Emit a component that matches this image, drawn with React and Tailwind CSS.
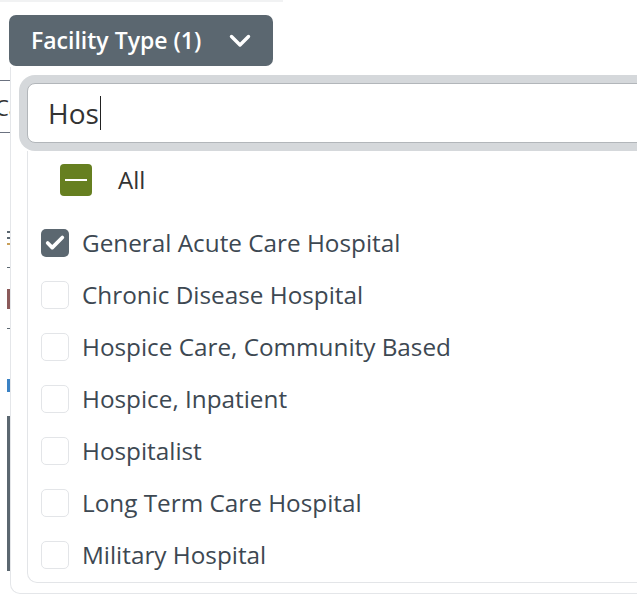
import { Check } from "lucide-react";

const items = [
  { label: "General Acute Care Hospital", checked: true },
  { label: "Chronic Disease Hospital", checked: false },
  { label: "Hospice Care, Community Based", checked: false },
  { label: "Hospice, Inpatient", checked: false },
  { label: "Hospitalist", checked: false },
  { label: "Long Term Care Hospital", checked: false },
  { label: "Military Hospital", checked: false },
];

const App = () => {
  return (
    <div
      className="relative w-[637px] h-[596px] overflow-hidden bg-white"
      style={{ fontFamily: '"Open Sans", "Noto Sans", sans-serif' }}>
      {/* page behind the dropdown */}
      <div className="h-[2px] w-[283px] bg-[#f1f2f3]" />
      <button className="mt-[13px] ml-[9px] h-[51px] w-[264px] flex items-center rounded-[7px] bg-[#5b6770] text-white pl-[22px]">
        <span className="text-[23px] font-semibold leading-none">Facility Type (1)</span>
        <svg width="22" height="14" viewBox="0 0 22 14" className="ml-[28px]" fill="none">
          <polyline points="2.5,2.5 11,11 19.5,2.5" stroke="white" strokeWidth="3.4" strokeLinecap="round" strokeLinejoin="round" />
        </svg>
      </button>
      <div className="w-[10px] flex flex-col">
        <div className="mt-[14px] h-[1px] bg-[#6b7280]" />
        <div className="h-[51px] flex items-center overflow-hidden text-[22px] text-[#333] leading-none">
          <span className="-ml-[5px]">Ca</span>
        </div>
        <div className="h-[1px] bg-[#6b7280]" />
        <div className="mt-[98px] ml-[7px] w-[3px] flex flex-col gap-[4px]">
          <div className="h-[2px] bg-[#5b6770]" />
          <div className="h-[2px] bg-[#5b6770]" />
          <div className="h-[2px] bg-[#c9a05a]" />
        </div>
        <div className="mt-[22px] ml-[7px] h-[1px] w-[3px] bg-[#5b6770]" />
        <div className="mt-[21px] ml-[7px] h-[20px] w-[3px] bg-[#8b5a5a]" />
        <div className="mt-[19px] ml-[7px] h-[1px] w-[3px] bg-[#5b6770]" />
        <div className="mt-[50px] ml-[7px] h-[13px] w-[3px] bg-[#3b82c4]" />
        <div className="mt-[24px] ml-[7px] h-[155px] w-[3px] bg-[#5b6770]" />
      </div>

      {/* dropdown panel */}
      <div className="absolute left-[10px] top-[67px] w-[720px] h-[527px] bg-white border-l border-b border-[#e4e6e9] rounded-bl-[10px] pl-[16px] pt-[16px]">
        <div className="h-[60px] flex items-center rounded-[8px] border border-[#b2b6ba] bg-white shadow-[0_0_0_8px_#d5d8db] pl-[20px] text-[28px] text-[#333]">
          <span className="leading-none">Hos</span>
          <span className="ml-[1px] h-[34px] w-[1px] bg-[#222]" />
        </div>
        <div className="mt-[8px] h-[432px] border-l border-b border-[#e3e5e8] rounded-bl-[10px] pt-[13px]">
          <div className="h-[32px] flex items-center pl-[32px]">
            <span className="w-[32px] h-[32px] rounded-[4px] bg-[#667f20] flex items-center justify-center">
              <span className="w-[22px] h-[2px] bg-white" />
            </span>
            <span className="ml-[26px] text-[24px] text-[#333]">All</span>
          </div>
          <div className="mt-[21px] flex flex-col">
            {items.map((item) => (
              <div key={item.label} className="h-[52px] flex items-center pl-[13px]">
                {item.checked ? (
                  <span className="w-[28px] h-[28px] rounded-[5px] bg-[#5b6770] flex items-center justify-center">
                    <Check size={22} strokeWidth={4} className="text-white" />
                  </span>
                ) : (
                  <span className="w-[28px] h-[28px] rounded-[5px] border border-[#e3e5e8] bg-white" />
                )}
                <span className="ml-[13px] text-[24.3px] text-[#3d4852] whitespace-nowrap">{item.label}</span>
              </div>
            ))}
          </div>
        </div>
      </div>
    </div>
  );
};

export default App;
